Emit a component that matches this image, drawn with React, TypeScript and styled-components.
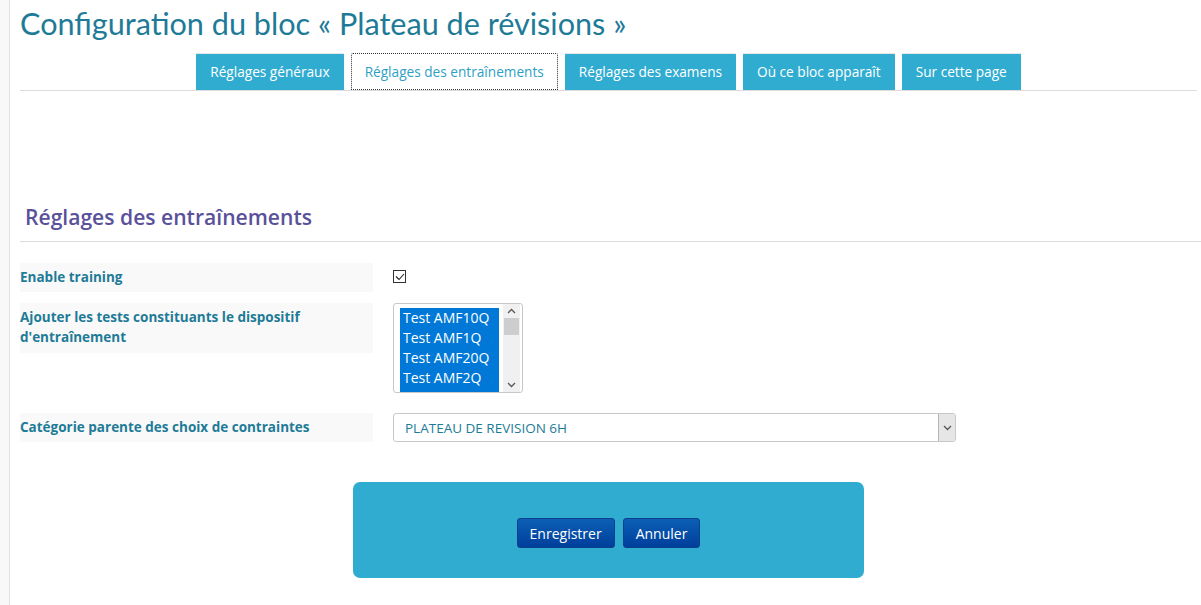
import styled, { createGlobalStyle } from "styled-components";

const GlobalStyle = createGlobalStyle`
  html, body {
    margin: 0;
    padding: 0;
    background: #f8f8f8;
    font-family: "Open Sans", "Liberation Sans", sans-serif;
  }
`;

const Page = styled.div`
  margin-left: 9px;
  min-height: 605px;
  background: #fff;
  border-left: 1px solid #e2e2e2;
  padding: 5px 0 0 10px;
  box-sizing: border-box;
`;

const Title = styled.h1`
  margin: 0;
  font-family: Lato, "Open Sans", sans-serif;
  font-weight: 400;
  font-size: 30.6px;
  line-height: 37px;
  color: #1e7b97;
`;

const TabBar = styled.div`
  display: flex;
  justify-content: center;
  gap: 7px;
  margin: 11px 4px 0 0;
  border-bottom: 1px solid #dcdcdc;
`;

const Tab = styled.div<{ active?: boolean }>`
  height: 37px;
  box-sizing: border-box;
  padding: 0 13px;
  display: flex;
  align-items: center;
  font-size: 13.65px;
  border-radius: 2px 2px 0 0;
  color: ${(p) => (p.active ? "#2e9fc4" : "#fff")};
  background: ${(p) => (p.active ? "#fff" : "#31acd1")};
  border: ${(p) => (p.active ? "1px dotted #333" : "1px solid #31acd1")};
  border-top-color: ${(p) => (p.active ? "#333" : "#e6e6e6")};
`;

const Section = styled.div`
  margin-top: 112px;
`;

const SectionTitle = styled.h2`
  margin: 0;
  padding: 0 0 10px 5px;
  font-size: 21.1px;
  font-weight: 600;
  line-height: 28px;
  color: #5a519b;
  border-bottom: 1px solid #dcdcdc;
`;

const Form = styled.div`
  display: flex;
  flex-direction: column;
  gap: 11px;
  margin-top: 21px;
`;

const Row = styled.div<{ extra?: number }>`
  display: flex;
  align-items: flex-start;
  gap: 20px;
  padding-bottom: ${(p) => p.extra ?? 0}px;
`;

const Label = styled.div<{ tall?: boolean }>`
  width: 353px;
  flex-shrink: 0;
  box-sizing: border-box;
  height: ${(p) => (p.tall ? 50 : 29)}px;
  padding: ${(p) => (p.tall ? "4px 20px 0 0" : "4px 0 0 0")};
  background: #f9f9f9;
  color: #1e7b97;
  font-size: 13.5px;
  font-weight: 700;
  line-height: 20px;
`;

const CheckBox = styled.div`
  margin-top: 7px;
  width: 11px;
  height: 11px;
  border: 1px solid #333;
  display: flex;
  align-items: center;
  justify-content: center;
  background: #fff;
`;

const ListBox = styled.div`
  width: 130px;
  height: 90px;
  box-sizing: border-box;
  border: 1px solid #c8c8c8;
  border-radius: 3px;
  display: flex;
  padding: 4px 0 0 6px;
  overflow: hidden;
`;

const Options = styled.div`
  width: 99px;
  background: #0078d7;
  display: flex;
  flex-direction: column;
`;

const Option = styled.div`
  color: #fff;
  font-size: 14px;
  line-height: 20px;
  padding-left: 3px;
  white-space: nowrap;
`;

const ScrollTrack = styled.div`
  width: 17px;
  margin-top: -4px;
  margin-left: 4px;
  display: flex;
  flex-direction: column;
  align-items: center;
  background: #f0f0f0;
  height: 88px;
`;

const Arrow = styled.div`
  height: 14px;
  display: flex;
  align-items: center;
  justify-content: center;
`;

const Thumb = styled.div`
  width: 15px;
  height: 17px;
  background: #cdcdcd;
`;

const Spacer = styled.div`
  flex: 1;
`;

const Select = styled.div`
  width: 563px;
  height: 29px;
  box-sizing: border-box;
  border: 1px solid #c8c8c8;
  border-radius: 3px;
  display: flex;
  align-items: stretch;
  overflow: hidden;
`;

const SelectText = styled.div`
  flex: 1;
  display: flex;
  align-items: center;
  padding-left: 11px;
  font-size: 13.5px;
  color: #1e7b97;
`;

const SelectButton = styled.div`
  width: 16px;
  background: #e6e6e6;
  border-left: 1px solid #b5b5b5;
  display: flex;
  align-items: center;
  justify-content: center;
`;

const ButtonPanel = styled.div`
  width: 511px;
  height: 96px;
  margin: 40px 0 0 333px;
  background: #31acd1;
  border-radius: 7px;
  display: flex;
  align-items: center;
  justify-content: center;
  gap: 8px;
  padding-top: 6px;
  box-sizing: border-box;
`;

const Button = styled.div`
  height: 30px;
  box-sizing: border-box;
  padding: 0 12px;
  display: flex;
  align-items: center;
  border-radius: 3px;
  border: 1px solid #0a3f8a;
  background: linear-gradient(#0b5fb5, #003f9c);
  color: #fff;
  font-size: 14px;
`;

const Chevron = ({ up }: { up?: boolean }) => (
  <svg width="9" height="6" viewBox="0 0 9 6">
    <path d={up ? "M1 5 L4.5 1.5 L8 5" : "M1 1 L4.5 4.5 L8 1"} fill="none" stroke="#555" strokeWidth="1.3" />
  </svg>
);

export default function App() {
  const tabs = ["Réglages généraux", "Réglages des entraînements", "Réglages des examens", "Où ce bloc apparaît", "Sur cette page"];
  const tests = ["Test AMF10Q", "Test AMF1Q", "Test AMF20Q", "Test AMF2Q"];
  return (
    <>
      <GlobalStyle />
      <Page>
        <Title>Configuration du bloc « Plateau de révisions »</Title>
        <TabBar>
          {tabs.map((t, i) => (
            <Tab key={t} active={i === 1}>{t}</Tab>
          ))}
        </TabBar>
        <Section>
          <SectionTitle>Réglages des entraînements</SectionTitle>
          <Form>
            <Row>
              <Label>Enable training</Label>
              <CheckBox>
                <svg width="10" height="8" viewBox="0 0 10 8">
                  <path d="M1 3.5 L4 6.5 L9 1" fill="none" stroke="#222" strokeWidth="1.1" />
                </svg>
              </CheckBox>
            </Row>
            <Row extra={9}>
              <Label tall>Ajouter les tests constituants le dispositif d'entraînement</Label>
              <ListBox>
                <Options>
                  {tests.map((t) => (
                    <Option key={t}>{t}</Option>
                  ))}
                </Options>
                <ScrollTrack>
                  <Arrow><Chevron up /></Arrow>
                  <Thumb />
                  <Spacer />
                  <Arrow><Chevron /></Arrow>
                </ScrollTrack>
              </ListBox>
            </Row>
            <Row>
              <Label>Catégorie parente des choix de contraintes</Label>
              <Select>
                <SelectText>PLATEAU DE REVISION 6H</SelectText>
                <SelectButton><Chevron /></SelectButton>
              </Select>
            </Row>
          </Form>
          <ButtonPanel>
            <Button>Enregistrer</Button>
            <Button>Annuler</Button>
          </ButtonPanel>
        </Section>
      </Page>
    </>
  );
}
